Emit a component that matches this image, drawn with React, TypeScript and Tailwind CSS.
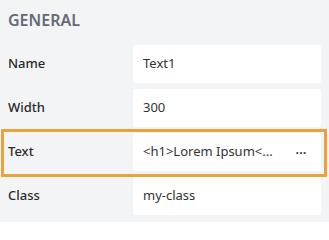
import React from 'react';

type Field = {
    label: string;
    value: string;
    button?: boolean;
    active?: boolean;
};

const fields: Field[] = [
    { label: 'Name', value: 'Text1' },
    { label: 'Width', value: '300' },
    { label: 'Text', value: '<h1>Lorem Ipsum<...', button: true, active: true },
    { label: 'Class', value: 'my-class' },
];

const App = () => {
    return (
        <div
            className="w-[329px] h-[222px] overflow-hidden bg-[#f3f4f6] pl-2 pr-2 text-[13px] text-[#333]"
            style={{ fontFamily: '"Noto Sans", "Open Sans", sans-serif' }}
        >
            <h2 className="pt-[8px] h-[45px] text-[16px] leading-[24px] font-semibold text-[#646b75]">GENERAL</h2>
            <div className="flex flex-col gap-[6px]">
                {fields.map((f) => (
                    <div key={f.label} className="relative flex items-center h-[38px]">
                        {f.active && (
                            <div className="absolute top-[-4px] bottom-[-6px] left-[-7px] right-[-6px] border-[3px] border-[#eaa23a] pointer-events-none" />
                        )}
                        <label className="w-[125px] shrink-0 font-medium text-[#2b2b2b]">{f.label}</label>
                        <div className="flex items-center flex-1 min-w-0 h-full bg-white rounded-[3px] pl-[10px]">
                            <span className="flex-1 min-w-0 whitespace-nowrap">{f.value}</span>
                            {f.button && <span className="w-[40px] shrink-0 text-center pb-1 font-semibold">...</span>}
                        </div>
                    </div>
                ))}
            </div>
        </div>
    );
};

export default App;
